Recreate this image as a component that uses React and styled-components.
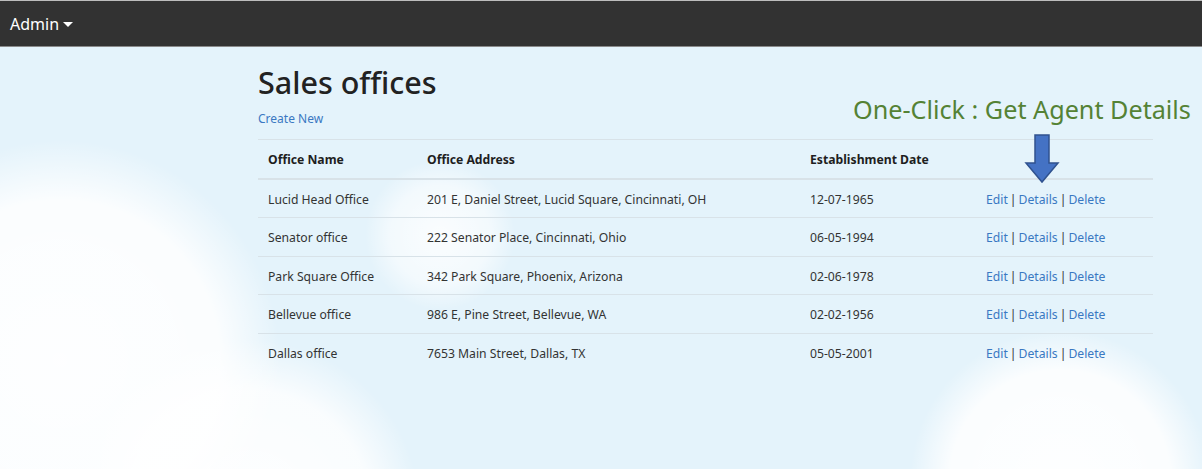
import React from "react";
import styled, { createGlobalStyle } from "styled-components";

const GlobalStyle = createGlobalStyle`
  html, body {
    margin: 0;
    padding: 0;
  }
  body {
    min-height: 469px;
    font-family: "Noto Sans", "Open Sans", sans-serif;
    color: #333;
    background-color: #e4f3fb;
    background-image:
      radial-gradient(circle at 60px 360px, rgba(255,255,255,0.95) 0, rgba(255,255,255,0.85) 160px, rgba(255,255,255,0) 220px),
      radial-gradient(circle at 250px 510px, rgba(255,255,255,0.95) 0, rgba(255,255,255,0.8) 120px, rgba(255,255,255,0) 170px),
      radial-gradient(circle at 440px 235px, rgba(255,255,255,0.85) 0, rgba(255,255,255,0.55) 50px, rgba(255,255,255,0) 75px),
      radial-gradient(circle at 1060px 480px, rgba(255,255,255,0.95) 0, rgba(255,255,255,0.85) 110px, rgba(255,255,255,0) 150px);
    background-repeat: no-repeat;
  }
`;

const Page = styled.div`
  position: relative;
  min-height: 469px;
`;

const NavBar = styled.div`
  height: 45px;
  background: #323232;
  border-top: 1px solid #bdbdbd;
  border-bottom: 1px solid #8a8a8a;
  display: flex;
  align-items: center;
  padding: 0 10px;
`;

const AdminMenu = styled.span`
  color: #fff;
  font-family: "Noto Sans", sans-serif;
  font-size: 16px;
  display: flex;
  align-items: center;
  gap: 4px;
`;

const Caret = styled.span`
  width: 0;
  height: 0;
  border-left: 5px solid transparent;
  border-right: 5px solid transparent;
  border-top: 5px solid #fff;
  margin-top: 2px;
`;

const Main = styled.div`
  margin-left: 258px;
  width: 895px;
  padding-top: 13px;
`;

const Title = styled.h1`
  margin: 0;
  font-size: 30.5px;
  font-weight: 500;
  color: #222;
  line-height: 44px;
`;

const CreateLink = styled.a`
  display: block;
  color: #3a78c2;
  font-size: 12px;
  text-decoration: none;
  margin-top: 6px;
  margin-bottom: 12px;
`;

const Table = styled.table`
  width: 100%;
  table-layout: fixed;
  border-collapse: collapse;
  font-size: 12.2px;
`;

const Th = styled.th`
  box-sizing: border-box;
  text-align: left;
  font-weight: 700;
  color: #1e1e1e;
  padding: 1px 10px 0;
  height: 39px;
  border-top: 1px solid #d8e2e8;
  border-bottom: 2px solid #d8e2e8;
  width: ${(p) => p.$w || "auto"};
`;

const Td = styled.td`
  padding: 2px 10px 0;
  height: 35.5px;
  color: #333;
  white-space: nowrap;
  border-bottom: ${(p) => (p.$last ? "none" : "1px solid #d8e2e8")};
`;

const ActionLink = styled.a`
  color: #3a78c2;
  text-decoration: none;
`;

const Sep = styled.span`
  color: #333;
  margin: 0 2px;
`;

const Callout = styled.div`
  position: absolute;
  left: 853px;
  top: 92px;
  color: #548235;
  font-family: "Noto Sans", sans-serif;
  font-size: 25.2px;
  white-space: nowrap;
`;

const Arrow = styled.svg`
  position: absolute;
  left: 1024px;
  top: 134px;
`;

const offices = [
  { name: "Lucid Head Office", address: "201 E, Daniel Street, Lucid Square, Cincinnati, OH", date: "12-07-1965" },
  { name: "Senator office", address: "222 Senator Place, Cincinnati, Ohio", date: "06-05-1994" },
  { name: "Park Square Office", address: "342 Park Square, Phoenix, Arizona", date: "02-06-1978" },
  { name: "Bellevue office", address: "986 E, Pine Street, Bellevue, WA", date: "02-02-1956" },
  { name: "Dallas office", address: "7653 Main Street, Dallas, TX", date: "05-05-2001" },
];

export default function App() {
  return (
    <Page>
      <GlobalStyle />
      <NavBar>
        <AdminMenu>
          Admin <Caret />
        </AdminMenu>
      </NavBar>
      <Main>
        <Title>Sales offices</Title>
        <CreateLink href="#">Create New</CreateLink>
        <Table>
          <thead>
            <tr>
              <Th $w="159px">Office Name</Th>
              <Th $w="383px">Office Address</Th>
              <Th $w="176px">Establishment Date</Th>
              <Th></Th>
            </tr>
          </thead>
          <tbody>
            {offices.map((o, i) => {
              const last = i === offices.length - 1;
              return (
                <tr key={o.name}>
                  <Td $last={last}>{o.name}</Td>
                  <Td $last={last}>{o.address}</Td>
                  <Td $last={last}>{o.date}</Td>
                  <Td $last={last}>
                    <ActionLink href="#">Edit</ActionLink>
                    <Sep>|</Sep>
                    <ActionLink href="#">Details</ActionLink>
                    <Sep>|</Sep>
                    <ActionLink href="#">Delete</ActionLink>
                  </Td>
                </tr>
              );
            })}
          </tbody>
        </Table>
      </Main>
      <Callout>One-Click : Get Agent Details</Callout>
      <Arrow width="36" height="50" viewBox="0 0 36 50">
        <path
          d="M11 1 H25 V29 H34 L18 48 L2 29 H11 Z"
          fill="#4472c4"
          stroke="#2f528f"
          strokeWidth="1.5"
        />
      </Arrow>
    </Page>
  );
}
